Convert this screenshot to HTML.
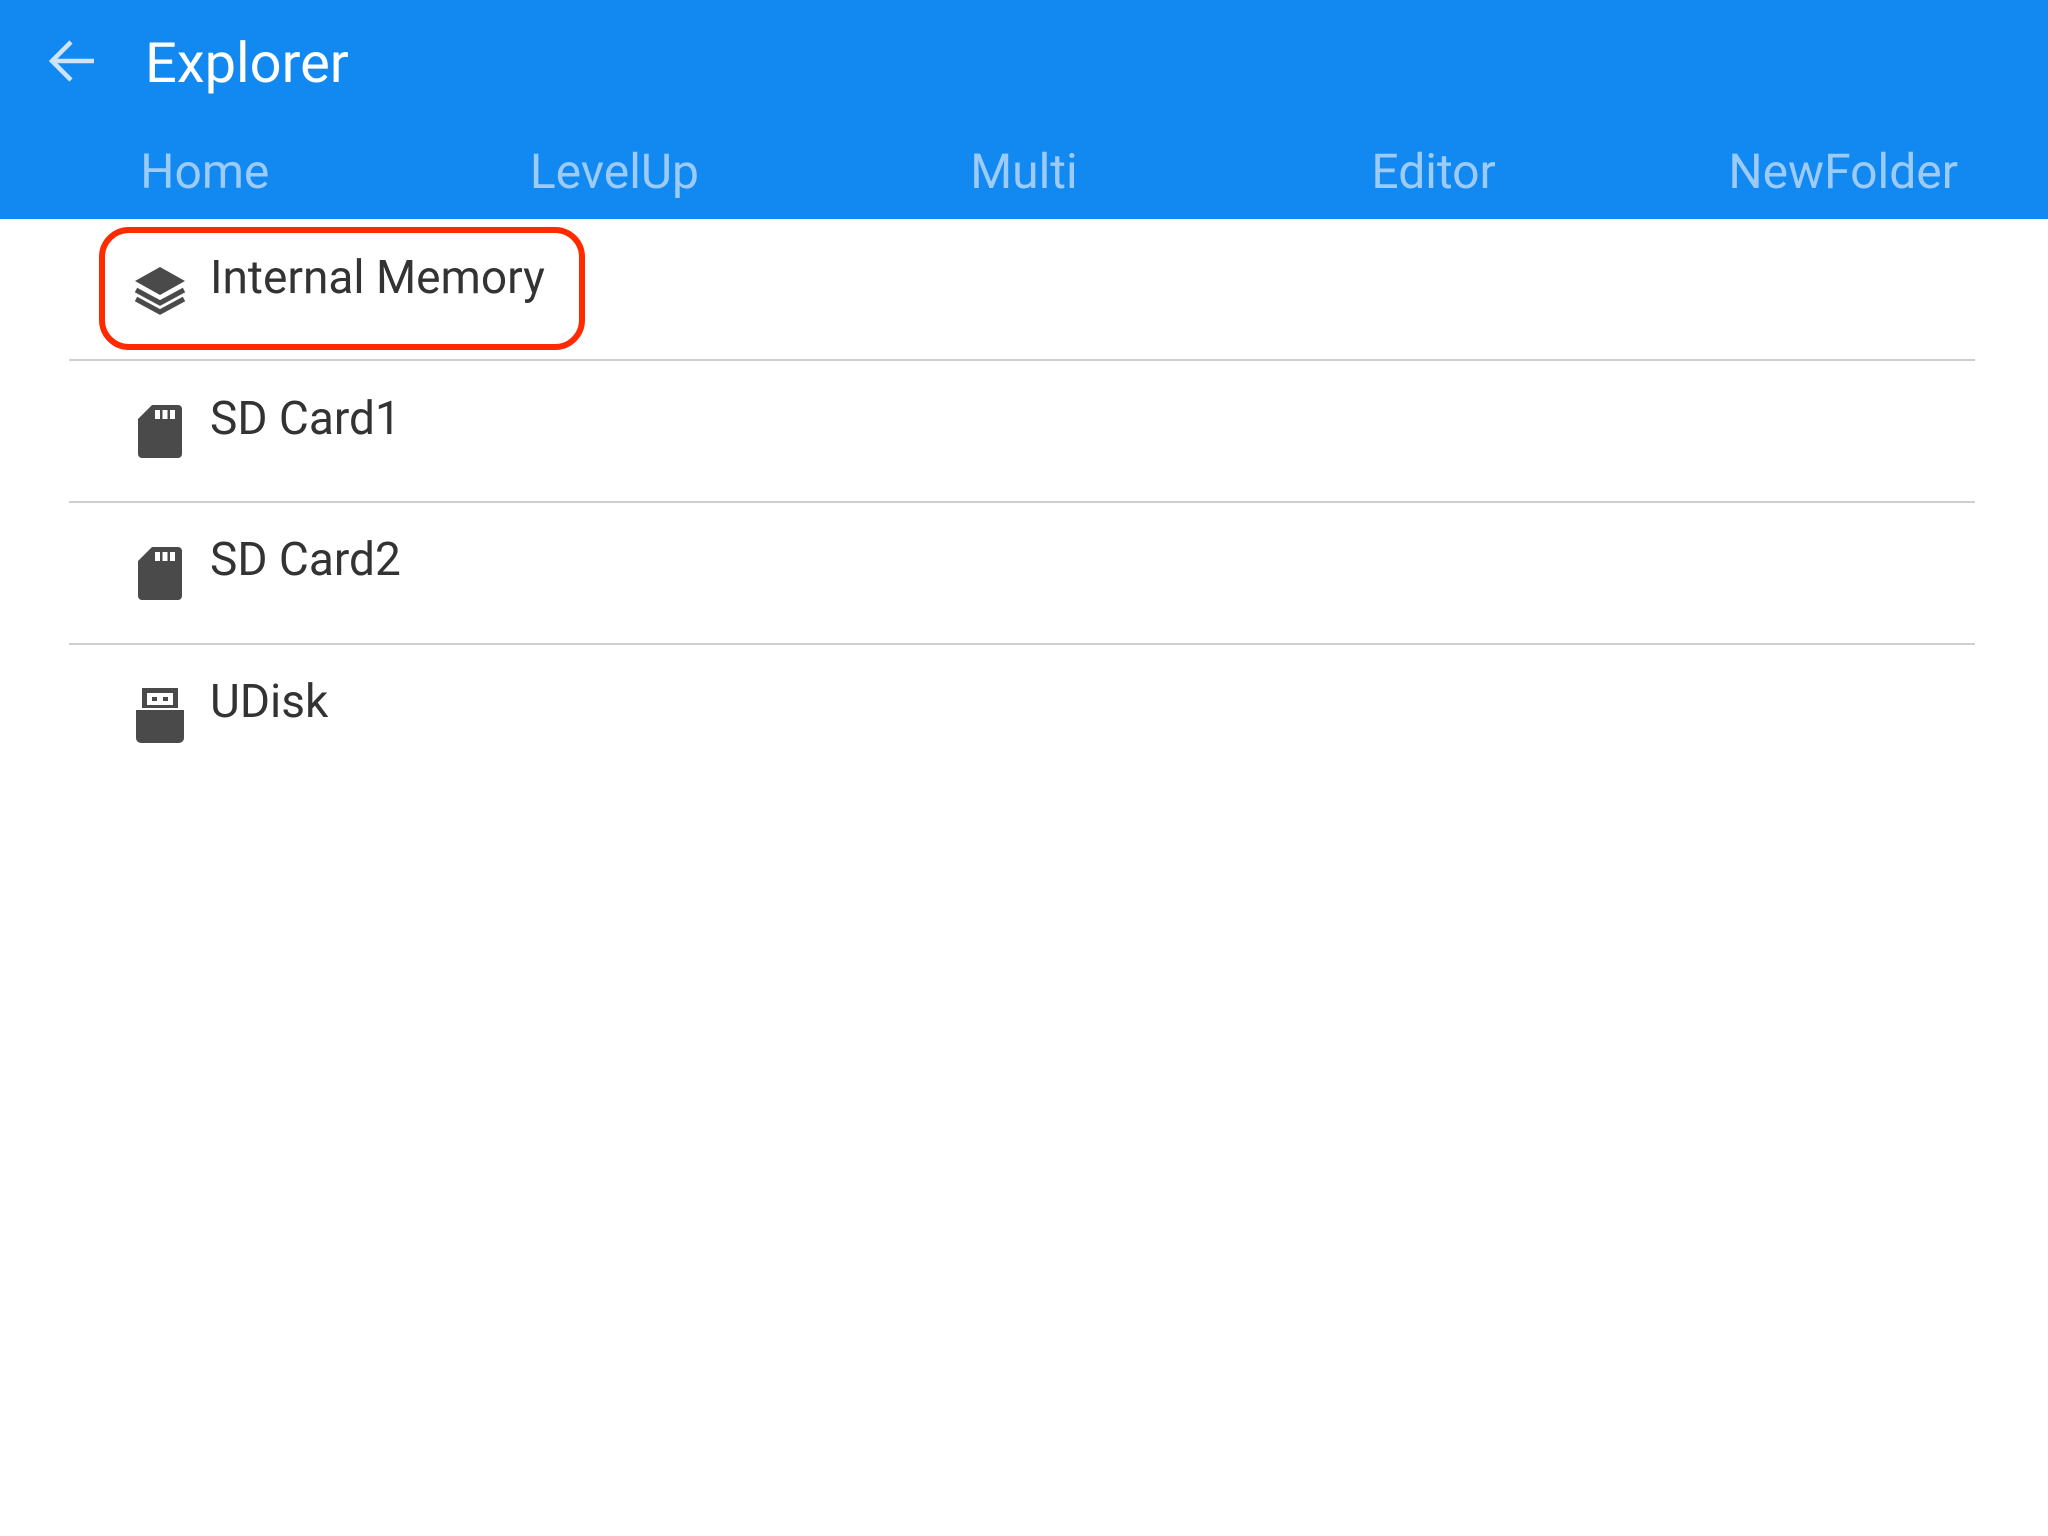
<!DOCTYPE html>
<html><head><meta charset="utf-8"><style>
html,body{margin:0;padding:0;width:2048px;height:1536px;background:#fff;overflow:hidden;font-family:"Roboto","Liberation Sans",sans-serif;}
.hdr{position:absolute;left:0;top:0;width:2048px;height:219px;background:#1289f0;}
.title{position:absolute;left:145px;top:28px;font-size:56px;color:#fff;line-height:70px;}
.tab{position:absolute;top:142px;width:409.6px;text-align:center;font-size:48px;line-height:60px;color:#9ccbf7;}
.sep{position:absolute;left:69px;width:1906px;height:2px;background:#cfcfcf;}
.item{position:absolute;left:210px;font-size:46px;color:#333;line-height:60px;}
.ic{position:absolute;}
.box{position:absolute;left:99px;top:227px;width:474px;height:111px;border:6px solid #ff2a00;border-radius:30px;}
</style></head><body>
<div class="hdr">
<svg class="ic" style="left:48px;top:38px" width="50" height="46" viewBox="0 0 50 46"><path d="M46 23H5M23 4L4 23l19 19" fill="none" stroke="#cfe4fb" stroke-width="4.5"/></svg>
<div class="title">Explorer</div>
<div class="tab" style="left:0">Home</div>
<div class="tab" style="left:409.6px">LevelUp</div>
<div class="tab" style="left:819.2px">Multi</div>
<div class="tab" style="left:1228.8px">Editor</div>
<div class="tab" style="left:1638.4px">NewFolder</div>
</div>
<div class="box"></div>
<svg class="ic" style="left:133px;top:265px" width="54" height="50" viewBox="0 0 54 50"><path d="M27 2L52 16 27 30 2 16Z" fill="#4a4a4a"/><path d="M3 25l24 13 24-13" fill="none" stroke="#4a4a4a" stroke-width="5"/><path d="M3 34l24 13 24-13" fill="none" stroke="#4a4a4a" stroke-width="5"/></svg>
<div class="item" style="top:248px">Internal Memory</div>
<div class="sep" style="top:359px"></div>
<svg class="ic" style="left:138px;top:405px" width="45" height="53" viewBox="0 0 45 53"><path d="M14 0H40a4 4 0 0 1 4 4V49a4 4 0 0 1-4 4H4a4 4 0 0 1-4-4V14Z" fill="#4a4a4a"/><rect x="17" y="5" width="5" height="9" fill="#fff"/><rect x="24.5" y="5" width="5" height="9" fill="#fff"/><rect x="32" y="5" width="5" height="9" fill="#fff"/></svg>
<div class="item" style="top:389px">SD Card1</div>
<div class="sep" style="top:501px"></div>
<svg class="ic" style="left:138px;top:547px" width="45" height="53" viewBox="0 0 45 53"><path d="M14 0H40a4 4 0 0 1 4 4V49a4 4 0 0 1-4 4H4a4 4 0 0 1-4-4V14Z" fill="#4a4a4a"/><rect x="17" y="5" width="5" height="9" fill="#fff"/><rect x="24.5" y="5" width="5" height="9" fill="#fff"/><rect x="32" y="5" width="5" height="9" fill="#fff"/></svg>
<div class="item" style="top:530px">SD Card2</div>
<div class="sep" style="top:643px"></div>
<svg class="ic" style="left:136px;top:688px" width="48" height="55" viewBox="0 0 48 55"><path d="M6 0H42V20H6Z" fill="#4a4a4a"/><rect x="11" y="5" width="26" height="12" fill="#fff"/><rect x="16" y="9" width="5" height="4" fill="#4a4a4a"/><rect x="27" y="9" width="5" height="4" fill="#4a4a4a"/><path d="M0 22H48V50a5 5 0 0 1-5 5H5a5 5 0 0 1-5-5Z" fill="#4a4a4a"/></svg>
<div class="item" style="top:672px">UDisk</div>
</body></html>
